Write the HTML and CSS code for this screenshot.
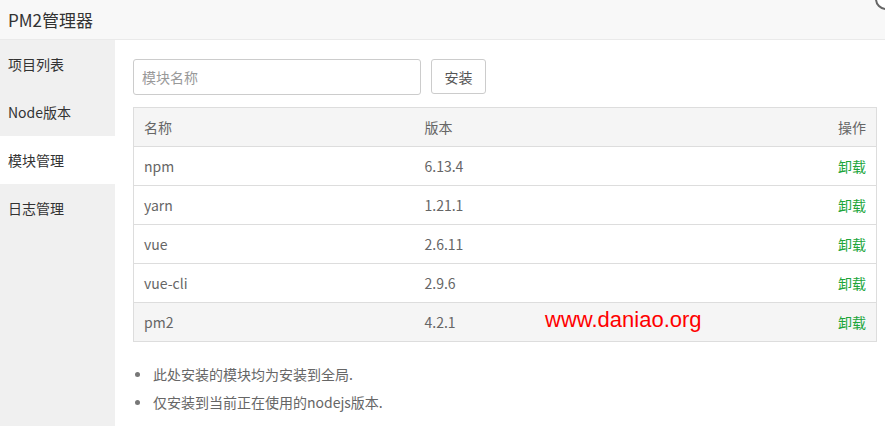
FILE: index.html
```html
<!DOCTYPE html>
<html lang="zh-CN">
<head>
<meta charset="utf-8">
<title>PM2管理器</title>
<link rel="stylesheet" href="styles.css">
</head>
<body>
<div class="window">
  <header class="title-bar">
    <span class="title">PM2管理器</span>
    <span class="close"></span>
  </header>
  <div class="body">
    <nav class="sidebar">
      <div class="nav-item">项目列表</div>
      <div class="nav-item">Node版本</div>
      <div class="nav-item active">模块管理</div>
      <div class="nav-item">日志管理</div>
    </nav>
    <main class="main">
      <div class="toolbar">
        <input class="module-input" type="text" placeholder="模块名称">
        <button class="btn">安装</button>
      </div>
      <div class="table-wrap">
        <table class="table">
          <thead>
            <tr><th class="col-name">名称</th><th>版本</th><th class="col-op">操作</th></tr>
          </thead>
          <tbody>
            <tr><td>npm</td><td>6.13.4</td><td class="col-op"><a class="link">卸载</a></td></tr>
            <tr><td>yarn</td><td>1.21.1</td><td class="col-op"><a class="link">卸载</a></td></tr>
            <tr><td>vue</td><td>2.6.11</td><td class="col-op"><a class="link">卸载</a></td></tr>
            <tr><td>vue-cli</td><td>2.9.6</td><td class="col-op"><a class="link">卸载</a></td></tr>
            <tr class="hover"><td>pm2</td><td>4.2.1</td><td class="col-op"><a class="link">卸载</a></td></tr>
          </tbody>
        </table>
        <span class="watermark">www.daniao.org</span>
      </div>
      <ul class="notes">
        <li>此处安装的模块均为安装到全局.</li>
        <li>仅安装到当前正在使用的nodejs版本.</li>
      </ul>
    </main>
  </div>
</div>
</body>
</html>
```
FILE: styles.css
```css
* { box-sizing: border-box; }
html, body { margin: 0; padding: 0; }
body {
  width: 885px;
  height: 426px;
  overflow: hidden;
  background: #fff;
  font-family: "Noto Sans CJK SC", "Open Sans", sans-serif;
  color: #333;
}
.window { display: flex; flex-direction: column; height: 426px; position: relative; }
.title-bar {
  height: 40px;
  background: #f8f8f8;
  border-bottom: 1px solid #eaeaea;
  display: flex;
  align-items: center;
  padding-left: 8px;
  position: relative;
}
.title { font-size: 17px; color: #333; line-height: 1; }
.close {
  position: absolute;
  right: -12px;
  top: -12px;
  width: 22px;
  height: 22px;
  border-radius: 50%;
  border: 2px solid #666;
  background: #fff;
}
.body { display: flex; flex: 1; }
.sidebar { width: 115px; background: #f0f0f0; }
.nav-item {
  height: 48px;
  display: flex;
  align-items: center;
  padding-left: 8px;
  font-size: 14px;
  color: #333;
}
.nav-item.active { background: #fff; }
.main { flex: 1; padding: 19px 8px 0 18px; }
.toolbar { display: flex; align-items: flex-start; gap: 10px; }
.module-input {
  width: 288px;
  height: 36px;
  border: 1px solid #ccc;
  border-radius: 3px;
  padding: 0 8px;
  font-family: inherit;
  font-size: 14px;
  color: #333;
  outline: none;
}
.module-input::placeholder { color: #999; }
.btn {
  width: 55px;
  height: 35px;
  border: 1px solid #ccc;
  border-radius: 3px;
  background: #fff;
  font-family: inherit;
  font-size: 14px;
  color: #555;
  padding: 0;
}
.table-wrap { position: relative; margin-top: 12px; }
.table {
  width: 100%;
  border-collapse: collapse;
  border: 1px solid #ddd;
  font-size: 14px;
  color: #666;
}
.table th, .table td {
  height: 39px;
  padding: 0 10px;
  border-top: 1px solid #ddd;
  text-align: left;
  font-weight: normal;
  vertical-align: middle;
}
.table thead th { background: #f5f5f5; color: #666; }
.table .col-name { width: 281px; }
.table .col-op { text-align: right; }
.table tr.hover td { background: #f5f5f5; }
.link { color: #20a53a; font-size: 14px; text-decoration: none; }
.watermark {
  position: absolute;
  left: 412px;
  top: 198px;
  font-family: "Liberation Sans", Arial, sans-serif;
  font-size: 22px;
  color: #ff0000;
  line-height: 30px;
}
.notes {
  margin: 18px 0 0 0;
  padding: 0 0 0 20px;
  list-style: none;
  font-size: 14px;
  color: #666;
}
.notes li { position: relative; line-height: 28px; }
.notes li::before {
  content: "";
  position: absolute;
  left: -18px;
  top: 12px;
  width: 5px;
  height: 5px;
  border-radius: 50%;
  background: #777;
}
```
